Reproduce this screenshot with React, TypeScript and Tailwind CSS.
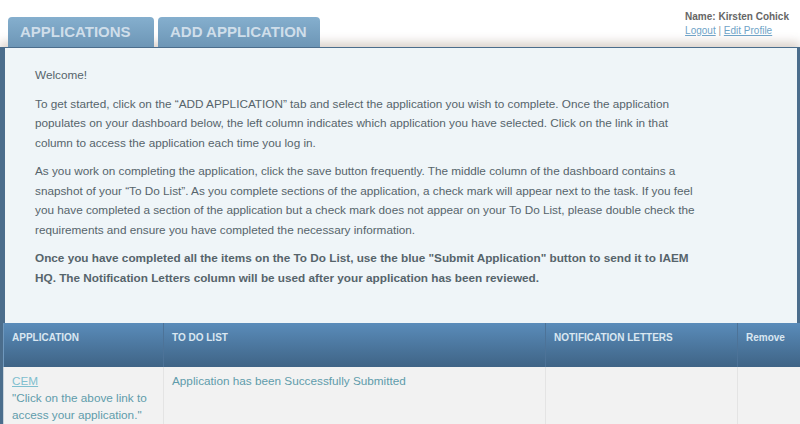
import React from 'react';

const font = { fontFamily: '"Liberation Sans", Arial, sans-serif' };

const columns = [
    { label: 'APPLICATION', w: 'w-[159px]' },
    { label: 'TO DO LIST', w: 'w-[382px]' },
    { label: 'NOTIFICATION LETTERS', w: 'w-[192px]' },
    { label: 'Remove', w: 'flex-1' },
];

const App: React.FC = () => {
    return (
        <div className="w-[800px] h-[424px] overflow-hidden bg-white text-[12px]" style={font}>
            {/* Top bar: tabs + user info */}
            <div className="relative z-10 flex justify-between h-[47px]">
                <div className="flex items-end gap-[4px] pl-[8px]">
                    <div className="h-[30px] w-[146px] rounded-t-[4px] bg-gradient-to-b from-[#85afce] to-[#6d96b6] flex items-center pl-[12px]">
                        <span className="text-[15px] font-bold text-[#cfdeea]">APPLICATIONS</span>
                    </div>
                    <div className="h-[30px] w-[162px] rounded-t-[4px] bg-gradient-to-b from-[#85afce] to-[#6d96b6] flex items-center pl-[12px]">
                        <span className="text-[15px] font-bold text-[#cfdeea]">ADD APPLICATION</span>
                    </div>
                </div>
                <div className="pt-[10px] pr-[11px] text-[10px] leading-[14px]">
                    <div className="font-bold text-[#666]">Name: Kirsten Cohick</div>
                    <div className="text-[#999]">
                        <a className="text-[#6fa3c7] underline">Logout</a> | <a className="text-[#6fa3c7] underline">Edit Profile</a>
                    </div>
                </div>
            </div>

            {/* Frame */}
            <div className="relative bg-[#4b6d8c] pl-[5px] pr-[3px] pt-[1px] shadow-[0_-5px_9px_rgba(140,110,90,0.3)]">
                <div className="bg-[#eff5f8] h-[275px] pt-[17px] pl-[30px] pr-[97px] text-[11.75px] text-[#56646b] leading-[19.5px]">
                    <p>Welcome!</p>
                    <p className="mt-[9px]">
                        To get started, click on the “ADD APPLICATION” tab and select the application you wish to complete. Once the application populates on your dashboard below, the left column indicates which application you have selected. Click on the link in that column to access the application each time you log in.
                    </p>
                    <p className="mt-[9px]">
                        As you work on completing the application, click the save button frequently. The middle column of the dashboard contains a snapshot of your “To Do List”. As you complete sections of the application, a check mark will appear next to the task. If you feel you have completed a section of the application but a check mark does not appear on your To Do List, please double check the requirements and ensure you have completed the necessary information.
                    </p>
                    <p className="mt-[9px] font-bold">
                        Once you have completed all the items on the To Do List, use the blue "Submit Application" button to send it to IAEM HQ. The Notification Letters column will be used after your application has been reviewed.
                    </p>
                </div>

                {/* Table */}
                <div className="-mr-[3px] -ml-[2px]">
                    <div className="flex h-[44px] bg-gradient-to-b from-[#5a8cba] to-[#3f6486] border-l border-[#6f98bd]">
                        {columns.map((c, i) => (
                            <div key={i} className={`${c.w} pt-[7px] px-[8px] text-[10px] font-bold text-[#dae7f1] ${i > 0 ? 'border-l border-[#4d7398]' : ''}`}>
                                {c.label}
                            </div>
                        ))}
                    </div>
                    <div className="flex bg-[#f2f2f2] h-[60px] text-[11.75px] leading-[17px] text-[#5f9cab] border-l border-[#c9d3db]">
                        <div className="w-[159px] pt-[5px] px-[8px]">
                            <a className="text-[#7fbfcf] underline">CEM</a>
                            <div>"Click on the above link to access your application."</div>
                        </div>
                        <div className="w-[382px] pt-[5px] px-[8px] border-l border-[#e4e4e4]">
                            Application has been Successfully Submitted
                        </div>
                        <div className="w-[192px] border-l border-[#e4e4e4]"></div>
                        <div className="flex-1 border-l border-[#e4e4e4]"></div>
                    </div>
                </div>
            </div>
        </div>
    );
};

export default App;
